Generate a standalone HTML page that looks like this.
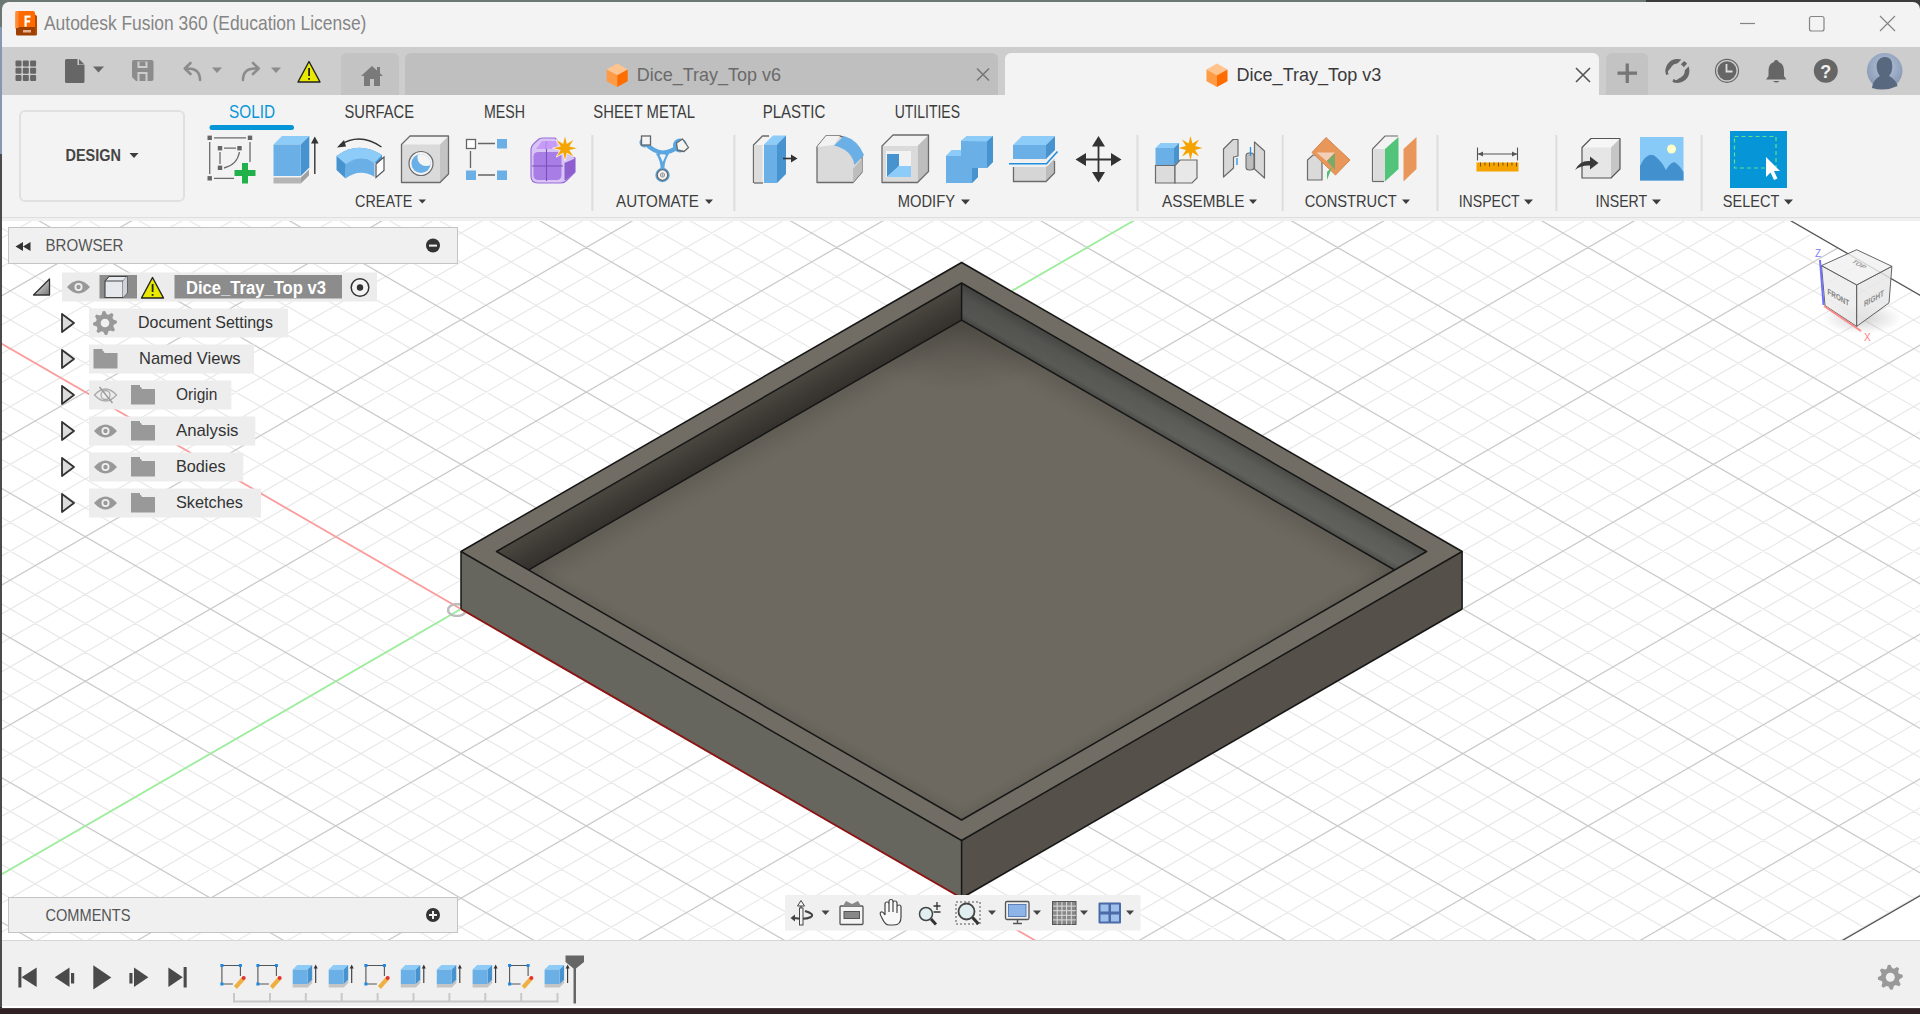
<!DOCTYPE html>
<html><head><meta charset="utf-8"><style>
*{box-sizing:border-box;margin:0;padding:0}
html,body{width:1920px;height:1014px;overflow:hidden;background:#3a2020;font-family:"Liberation Sans",sans-serif}
.a{position:absolute}
.t{position:absolute;white-space:nowrap;font-family:"Liberation Sans",sans-serif}
</style></head><body>
<div class="a" style="left:0;top:0;width:1646px;height:10px;background:#6b7772"></div>
<div class="a" style="left:1646px;top:0;width:274px;height:10px;background:#393c3b"></div>
<div class="a" style="left:0;top:0;width:3px;height:27px;background:#6b7772"></div>
<div class="a" style="left:0;top:27px;width:3px;height:127px;background:#8797b3"></div>
<div class="a" style="left:0;top:154px;width:3px;height:856px;background:#4b4b4b"></div>
<div class="a" style="left:0;top:1007px;width:1920px;height:7px;background:#2f2123"></div><div class="a" style="left:0;top:1008px;width:1920px;height:1px;background:#473b3d"></div>
<div class="a" style="left:2px;top:2px;width:1918px;height:1005px;background:#f3f3f3;border-radius:7px 7px 0 0;overflow:hidden">
</div>
<svg width="1920" height="1014" viewBox="0 0 1920 1014" style="position:absolute;left:0;top:0">
<defs><clipPath id="vpc"><rect x="2" y="221" width="1918" height="719"/></clipPath>
<clipPath id="gc"><polygon points="-6467.2,609.0 -2025.4,3173.5 2439.9,595.5 -2002.0,-1969.0"/></clipPath>
<clipPath id="ic"><polygon points="496.5,551.5 961.6,283.0 1426.6,551.5 961.6,820.0"/></clipPath>
<linearGradient id="gbl" gradientUnits="userSpaceOnUse" x1="0" y1="0" x2="0" y2="37" gradientTransform="translate(962,283) skewY(-30)"><stop offset="0" stop-color="#4a4741"/><stop offset="0.55" stop-color="#3d3a35"/><stop offset="1" stop-color="#34312d"/></linearGradient>
<linearGradient id="gbr" gradientUnits="userSpaceOnUse" x1="0" y1="0" x2="0" y2="37" gradientTransform="translate(962,283) skewY(30)"><stop offset="0" stop-color="#4a4b47"/><stop offset="0.35" stop-color="#5b5c57"/><stop offset="0.8" stop-color="#60615c"/><stop offset="1" stop-color="#4e4e4a"/></linearGradient>
<linearGradient id="gbrx" gradientUnits="userSpaceOnUse" x1="962" y1="0" x2="1200" y2="0"><stop offset="0" stop-color="#000" stop-opacity="0.12"/><stop offset="1" stop-color="#000" stop-opacity="0"/></linearGradient>
<filter id="gblur" x="-1%" y="-1%" width="102%" height="102%"><feGaussianBlur stdDeviation="0.45"/></filter>
<filter id="ao" x="-20%" y="-20%" width="140%" height="140%"><feGaussianBlur stdDeviation="9"/></filter>
<filter id="ao2" x="-20%" y="-20%" width="140%" height="140%"><feGaussianBlur stdDeviation="4"/></filter>
<radialGradient id="aoc" gradientUnits="userSpaceOnUse" cx="962" cy="322" r="70" gradientTransform="translate(962,322) scale(1.6,1) translate(-962,-322)"><stop offset="0" stop-color="#1e1c19" stop-opacity="0.3"/><stop offset="1" stop-color="#1e1c19" stop-opacity="0"/></radialGradient>
</defs>
<rect x="2" y="221" width="1918" height="719" fill="#ffffff"/>
<g clip-path="url(#vpc)"><g clip-path="url(#gc)">
<g filter="url(#gblur)"><path d="M-4480.8 1755.9L2447.4 -2244.1M-4455.7 1770.3L2472.5 -2229.7M-4430.7 1784.8L2497.5 -2215.2M-4405.6 1799.2L2522.6 -2200.8M-4355.6 1828.2L2572.6 -2171.8M-4330.5 1842.6L2597.7 -2157.4M-4305.5 1857.1L2622.7 -2142.9M-4280.4 1871.5L2647.8 -2128.5M-4230.3 1900.5L2697.9 -2099.5M-4205.3 1914.9L2722.9 -2085.1M-4180.2 1929.4L2748.0 -2070.6M-4155.2 1943.8L2773.0 -2056.2M-4105.1 1972.8L2823.1 -2027.2M-4080.1 1987.2L2848.1 -2012.8M-4055.0 2001.7L2873.2 -1998.3M-4030.0 2016.1L2898.2 -1983.9M-3979.9 2045.1L2948.3 -1954.9M-3954.8 2059.5L2973.4 -1940.5M-3929.8 2074.0L2998.4 -1926.0M-3904.7 2088.4L3023.5 -1911.6M-3854.6 2117.4L3073.6 -1882.6M-3829.6 2131.8L3098.6 -1868.2M-3804.6 2146.3L3123.6 -1853.7M-3779.5 2160.7L3148.7 -1839.3M-3729.4 2189.7L3198.8 -1810.3M-3704.4 2204.1L3223.8 -1795.9M-3679.3 2218.6L3248.9 -1781.4M-3654.3 2233.0L3273.9 -1767.0M-3604.2 2262.0L3324.0 -1738.0M-3579.1 2276.4L3349.1 -1723.6M-3554.1 2290.9L3374.1 -1709.1M-3529.1 2305.3L3399.1 -1694.7M-3479.0 2334.3L3449.2 -1665.7M-3453.9 2348.7L3474.3 -1651.3M-3428.9 2363.2L3499.3 -1636.8M-3403.8 2377.6L3524.4 -1622.4M-3353.7 2406.6L3574.5 -1593.4M-3328.7 2421.0L3599.5 -1579.0M-3303.6 2435.5L3624.6 -1564.5M-3278.6 2449.9L3649.6 -1550.1M-3228.5 2478.9L3699.7 -1521.1M-3203.5 2493.3L3724.7 -1506.7M-3178.4 2507.8L3749.8 -1492.2M-3153.4 2522.2L3774.8 -1477.8M-3103.3 2551.2L3824.9 -1448.8M-3078.2 2565.6L3850.0 -1434.4M-3053.2 2580.1L3875.0 -1419.9M-3028.1 2594.5L3900.1 -1405.5M-2978.1 2623.5L3950.1 -1376.5M-2953.0 2637.9L3975.2 -1362.1M-2928.0 2652.4L4000.2 -1347.6M-2902.9 2666.8L4025.3 -1333.2M-2852.8 2695.8L4075.4 -1304.2M-2827.8 2710.2L4100.4 -1289.8M-2802.7 2724.7L4125.5 -1275.3M-2777.7 2739.1L4150.5 -1260.9M-2727.6 2768.1L4200.6 -1231.9M-2702.6 2782.5L4225.6 -1217.5M-2677.5 2797.0L4250.7 -1203.0M-2652.5 2811.4L4275.7 -1188.6M-2602.4 2840.4L4325.8 -1159.6M-2577.3 2854.8L4350.9 -1145.2M-2552.3 2869.3L4375.9 -1130.7M-2527.2 2883.7L4401.0 -1116.3M-2477.1 2912.7L4451.1 -1087.3M-2452.1 2927.1L4476.1 -1072.9M-2427.1 2941.6L4501.1 -1058.4M-2402.0 2956.0L4526.2 -1044.0M-2351.9 2985.0L4576.3 -1015.0M-2326.9 2999.4L4601.3 -1000.6M-2301.8 3013.9L4626.4 -986.1M-2276.8 3028.3L4651.4 -971.7M-2226.7 3057.3L4701.5 -942.7M-2201.6 3071.7L4726.6 -928.3M-2176.6 3086.2L4751.6 -913.8M-2151.6 3100.6L4776.6 -899.4M-2101.5 3129.6L4826.7 -870.4M-2076.4 3144.0L4851.8 -856.0M-2051.4 3158.5L4876.8 -841.5M-2026.3 3172.9L4901.9 -827.1M-4480.8 -537.9L2447.4 3462.1M-4455.7 -552.3L2472.5 3447.7M-4430.7 -566.8L2497.5 3433.2M-4405.6 -581.2L2522.6 3418.8M-4355.6 -610.2L2572.6 3389.8M-4330.5 -624.6L2597.7 3375.4M-4305.5 -639.1L2622.7 3360.9M-4280.4 -653.5L2647.8 3346.5M-4230.3 -682.5L2697.9 3317.5M-4205.3 -696.9L2722.9 3303.1M-4180.2 -711.4L2748.0 3288.6M-4155.2 -725.8L2773.0 3274.2M-4105.1 -754.8L2823.1 3245.2M-4080.1 -769.2L2848.1 3230.8M-4055.0 -783.7L2873.2 3216.3M-4030.0 -798.1L2898.2 3201.9M-3979.9 -827.1L2948.3 3172.9M-3954.8 -841.5L2973.4 3158.5M-3929.8 -856.0L2998.4 3144.0M-3904.7 -870.4L3023.5 3129.6M-3854.6 -899.4L3073.6 3100.6M-3829.6 -913.8L3098.6 3086.2M-3804.6 -928.3L3123.6 3071.7M-3779.5 -942.7L3148.7 3057.3M-3729.4 -971.7L3198.8 3028.3M-3704.4 -986.1L3223.8 3013.9M-3679.3 -1000.6L3248.9 2999.4M-3654.3 -1015.0L3273.9 2985.0M-3604.2 -1044.0L3324.0 2956.0M-3579.1 -1058.4L3349.1 2941.6M-3554.1 -1072.9L3374.1 2927.1M-3529.1 -1087.3L3399.1 2912.7M-3479.0 -1116.3L3449.2 2883.7M-3453.9 -1130.7L3474.3 2869.3M-3428.9 -1145.2L3499.3 2854.8M-3403.8 -1159.6L3524.4 2840.4M-3353.7 -1188.6L3574.5 2811.4M-3328.7 -1203.0L3599.5 2797.0M-3303.6 -1217.5L3624.6 2782.5M-3278.6 -1231.9L3649.6 2768.1M-3228.5 -1260.9L3699.7 2739.1M-3203.5 -1275.3L3724.7 2724.7M-3178.4 -1289.8L3749.8 2710.2M-3153.4 -1304.2L3774.8 2695.8M-3103.3 -1333.2L3824.9 2666.8M-3078.2 -1347.6L3850.0 2652.4M-3053.2 -1362.1L3875.0 2637.9M-3028.1 -1376.5L3900.1 2623.5M-2978.1 -1405.5L3950.1 2594.5M-2953.0 -1419.9L3975.2 2580.1M-2928.0 -1434.4L4000.2 2565.6M-2902.9 -1448.8L4025.3 2551.2M-2852.8 -1477.8L4075.4 2522.2M-2827.8 -1492.2L4100.4 2507.8M-2802.7 -1506.7L4125.5 2493.3M-2777.7 -1521.1L4150.5 2478.9M-2727.6 -1550.1L4200.6 2449.9M-2702.6 -1564.5L4225.6 2435.5M-2677.5 -1579.0L4250.7 2421.0M-2652.5 -1593.4L4275.7 2406.6M-2602.4 -1622.4L4325.8 2377.6M-2577.3 -1636.8L4350.9 2363.2M-2552.3 -1651.3L4375.9 2348.7M-2527.2 -1665.7L4401.0 2334.3M-2477.1 -1694.7L4451.1 2305.3M-2452.1 -1709.1L4476.1 2290.9M-2427.1 -1723.6L4501.1 2276.4M-2402.0 -1738.0L4526.2 2262.0M-2351.9 -1767.0L4576.3 2233.0M-2326.9 -1781.4L4601.3 2218.6M-2301.8 -1795.9L4626.4 2204.1M-2276.8 -1810.3L4651.4 2189.7M-2226.7 -1839.3L4701.5 2160.7M-2201.6 -1853.7L4726.6 2146.3M-2176.6 -1868.2L4751.6 2131.8M-2151.6 -1882.6L4776.6 2117.4M-2101.5 -1911.6L4826.7 2088.4M-2076.4 -1926.0L4851.8 2074.0M-2051.4 -1940.5L4876.8 2059.5M-2026.3 -1954.9L4901.9 2045.1" stroke="#e9e9e9" stroke-width="1.25" fill="none"/>
<path d="M-4505.8 1741.4L2422.4 -2258.6M-4380.6 1813.7L2547.6 -2186.3M-4255.4 1886.0L2672.8 -2114.0M-4130.1 1958.3L2798.1 -2041.7M-4004.9 2030.6L2923.3 -1969.4M-3879.7 2102.9L3048.5 -1897.1M-3754.5 2175.2L3173.7 -1824.8M-3629.2 2247.5L3299.0 -1752.5M-3504.0 2319.8L3424.2 -1680.2M-3378.8 2392.1L3549.4 -1607.9M-3253.6 2464.4L3674.6 -1535.6M-3128.3 2536.7L3799.9 -1463.3M-3003.1 2609.0L3925.1 -1391.0M-2877.9 2681.3L4050.3 -1318.7M-2752.6 2753.6L4175.6 -1246.4M-2627.4 2825.9L4300.8 -1174.1M-2502.2 2898.2L4426.0 -1101.8M-2377.0 2970.5L4551.2 -1029.5M-2251.7 3042.8L4676.5 -957.2M-2126.5 3115.1L4801.7 -884.9M-4505.8 -523.4L2422.4 3476.6M-4380.6 -595.7L2547.6 3404.3M-4255.4 -668.0L2672.8 3332.0M-4130.1 -740.3L2798.1 3259.7M-4004.9 -812.6L2923.3 3187.4M-3879.7 -884.9L3048.5 3115.1M-3754.5 -957.2L3173.7 3042.8M-3629.2 -1029.5L3299.0 2970.5M-3504.0 -1101.8L3424.2 2898.2M-3378.8 -1174.1L3549.4 2825.9M-3253.6 -1246.4L3674.6 2753.6M-3128.3 -1318.7L3799.9 2681.3M-3003.1 -1391.0L3925.1 2609.0M-2877.9 -1463.3L4050.3 2536.7M-2752.6 -1535.6L4175.6 2464.4M-2627.4 -1607.9L4300.8 2392.1M-2502.2 -1680.2L4426.0 2319.8M-2377.0 -1752.5L4551.2 2247.5M-2251.7 -1824.8L4676.5 2175.2M-2126.5 -1897.1L4801.7 2102.9" stroke="#cbcbcb" stroke-width="1.3" fill="none"/></g>
</g>
<path d="M-2025.4 3173.5L2439.9 595.5M-2002.0 -1969.0L2439.9 595.5" stroke="#555" stroke-width="1.3" fill="none"/>
<path d="M-3003.1 -1391.0L3925.1 2609.0" stroke="#ff9c9c" stroke-width="1.7" filter="url(#gblur)" fill="none"/>
<path d="M-3003.1 2609.0L1462.1 31.0" stroke="#9cf09c" stroke-width="1.7" filter="url(#gblur)" fill="none"/>
<ellipse cx="457.0" cy="610.0" rx="9" ry="6" fill="none" stroke="#bdbdbd" stroke-width="2.6" filter="url(#gblur)"/>
<polygon points="461.0,609.0 961.6,898.0 961.6,840.5 461.0,551.5" fill="#66665f"/>
<polygon points="961.6,898.0 1462.1,609.0 1462.1,551.5 961.6,840.5" fill="#55514a"/>
<path d="M461.0,551.5 961.6,262.5 1462.1,551.5 961.6,840.5Z M496.5,551.5 961.6,283.0 1426.6,551.5 961.6,820.0Z" fill="#716d64" fill-rule="evenodd"/>
<g clip-path="url(#ic)">
<polygon points="496.5,588.5 961.6,320.0 1426.6,588.5 961.6,857.0" fill="#6d6960"/>
<polyline points="496.5,588.5 961.6,320.0 1426.6,588.5" fill="none" stroke="#2e2b27" stroke-width="18" opacity="0.24" filter="url(#ao)"/>
<ellipse cx="962" cy="322" rx="115" ry="72" fill="url(#aoc)"/>
<polyline points="961.6,283.0 496.5,551.5 961.6,820.0 1426.6,551.5" fill="none" stroke="#2e2b27" stroke-width="8" opacity="0.16" filter="url(#ao2)"/>
<polygon points="496.5,551.5 961.6,283.0 961.6,320.0 496.5,588.5" fill="url(#gbl)"/>
<polygon points="961.6,283.0 1426.6,551.5 1426.6,588.5 961.6,320.0" fill="url(#gbr)"/>
<polygon points="961.6,283.0 1426.6,551.5 1426.6,588.5 961.6,320.0" fill="url(#gbrx)"/>
<polyline points="496.5,588.5 961.6,320.0 1426.6,588.5" fill="none" stroke="#161616" stroke-width="1.5"/>
<path d="M961.6 283.0L961.6 320.0" stroke="#161616" stroke-width="1.5"/>
</g>
<polygon points="496.5,551.5 961.6,283.0 1426.6,551.5 961.6,820.0" fill="none" stroke="#161616" stroke-width="1.5" stroke-linejoin="round"/>
<polygon points="461.0,551.5 961.6,262.5 1462.1,551.5 961.6,840.5" fill="none" stroke="#161616" stroke-width="1.5" stroke-linejoin="round"/>
<path d="M461.0 609.0L461.0 551.5" stroke="#161616" stroke-width="1.5"/>
<path d="M961.6 898.0L961.6 840.5" stroke="#161616" stroke-width="1.5"/>
<path d="M1462.1 609.0L1462.1 551.5" stroke="#161616" stroke-width="1.5"/>
<path d="M961.6 898.0L1462.1 609.0" stroke="#161616" stroke-width="1.5"/>
<path d="M461.0 609.0L961.6 898.0" stroke="#8a1414" stroke-width="1.8"/>
</g></svg>
<!-- tab bar -->
<div class="a" style="left:2px;top:47px;width:1918px;height:48px;background:#cdcdcd"></div>
<div class="a" style="left:341px;top:53px;width:58px;height:42px;background:#c3c3c3;border-radius:6px 6px 0 0"></div>
<div class="a" style="left:405px;top:53px;width:593px;height:42px;background:#bfbfbf;border-radius:6px 6px 0 0"></div>
<div class="a" style="left:1005px;top:53px;width:594px;height:42px;background:#f3f3f3;border-radius:6px 6px 0 0"></div>
<div class="a" style="left:1606px;top:53px;width:42px;height:42px;background:#c3c3c3;border-radius:6px 6px 0 0"></div>
<!-- toolbar -->
<div class="a" style="left:2px;top:95px;width:1918px;height:122px;background:#f3f3f3"></div><div class="a" style="left:2px;top:217px;width:1918px;height:1px;background:#dedede"></div><div class="a" style="left:2px;top:218px;width:1918px;height:3px;background:#f0f0f0"></div>
<div class="a" style="left:19px;top:110px;width:166px;height:92px;border:2px solid #e0e0e0;border-radius:6px"></div>
<!-- timeline -->
<div class="a" style="left:2px;top:940px;width:1918px;height:67px;background:#f0f0f0;border-top:1px solid #d6d6d6"></div>
<div class="a" style="left:2px;top:1006px;width:1918px;height:1.5px;background:#ffffff"></div>
<svg width="1920" height="1014" viewBox="0 0 1920 1014" style="position:absolute;left:0;top:0" font-family="Liberation Sans, sans-serif">
<g>
<rect x="15.5" y="11" width="19.5" height="19" rx="2" fill="#ff6a00"/>
<rect x="16" y="27" width="21" height="8.5" rx="1.5" fill="#9e4000"/>
<path d="M35 14.5 L37 16 L37 34 L35 34Z" fill="#b84a00"/>
<rect x="15.5" y="11" width="3" height="17" fill="#ff8a3a"/>
<path d="M24.5 15.5h6v2.2h-3.8v2.5h3.4v2.2h-3.4v4.3h-2.2z" fill="#ffffff"/>
<rect x="23" y="30" width="8" height="2.5" fill="#e8b090"/>
</g>
<text x="44.0" y="30.2" font-size="19.42" fill="#858585" font-weight="400" textLength="322.4" lengthAdjust="spacingAndGlyphs" >Autodesk Fusion 360 (Education License)</text>
<path d="M1740 23.5h15" stroke="#858585" stroke-width="1.2"/>
<rect x="1809.5" y="16.5" width="14.5" height="14.5" rx="2" fill="none" stroke="#858585" stroke-width="1.2"/>
<path d="M1880 16L1895 31M1895 16L1880 31" stroke="#858585" stroke-width="1.2"/>
<rect x="15.5" y="60.5" width="6" height="6" rx="1" fill="#666"/><rect x="15.5" y="67.8" width="6" height="6" rx="1" fill="#666"/><rect x="15.5" y="75.1" width="6" height="6" rx="1" fill="#666"/><rect x="22.8" y="60.5" width="6" height="6" rx="1" fill="#666"/><rect x="22.8" y="67.8" width="6" height="6" rx="1" fill="#666"/><rect x="22.8" y="75.1" width="6" height="6" rx="1" fill="#666"/><rect x="30.1" y="60.5" width="6" height="6" rx="1" fill="#666"/><rect x="30.1" y="67.8" width="6" height="6" rx="1" fill="#666"/><rect x="30.1" y="75.1" width="6" height="6" rx="1" fill="#666"/>
<path d="M65 60.5 Q65 59 66.5 59 L77.5 59 L77.5 65 L84.5 65 L84.5 81.5 Q84.5 83 83 83 L66.5 83 Q65 83 65 81.5Z" fill="#666"/><path d="M79 59L84.5 64.5L79 64.5Z" fill="#666"/>
<path d="M93 66.5L104 66.5L98.5 72.5Z" fill="#666"/>
<path d="M132 62 Q132 60 134 60 L151.5 60 Q153.5 60 153.5 62 L153.5 79 Q153.5 81 151.5 81 L136 81 L132 77Z" fill="#8c8c8c"/><rect x="137.5" y="61.5" width="10" height="6.5" fill="#cdcdcd"/><rect x="137.5" y="72" width="10" height="9" fill="#cdcdcd"/><rect x="139.5" y="74" width="6" height="7" fill="#8c8c8c"/><rect x="139.5" y="61.5" width="6" height="4.5" fill="#8c8c8c"/>
<path d="M200 80 C200 72 196 68.5 188 68.5 L185 68.5 M190.5 63 L184.8 68.5 L190.5 74" fill="none" stroke="#8c8c8c" stroke-width="2.6" stroke-linecap="round" stroke-linejoin="round"/>
<path d="M212 67.5L222 67.5L217.0 73.0Z" fill="#8c8c8c"/>
<path d="M243 80 C243 72 247 68.5 255 68.5 L258.5 68.5 M253 63 L258.7 68.5 L253 74" fill="none" stroke="#8c8c8c" stroke-width="2.6" stroke-linecap="round" stroke-linejoin="round"/>
<path d="M271 67.5L281 67.5L276.0 73.0Z" fill="#8c8c8c"/>
<path d="M309 61.5 L320 82 L298 82Z" fill="#e8e800" stroke="#222" stroke-width="1.4" stroke-linejoin="round"/><rect x="308.2" y="68" width="1.8" height="8" fill="#222"/><rect x="308.2" y="78" width="1.8" height="1.8" fill="#222"/>
<path d="M372 66 L383 76 L380 76 L380 86 L364 86 L364 76 L361 76Z" fill="#7a7a7a"/><rect x="377" y="67" width="3" height="6" fill="#7a7a7a"/><rect x="370" y="79" width="4" height="7" fill="#c3c3c3"/>
<path d="M617.2 63.55 L627.7 69.425 L617.2 75.3 L606.7 69.425Z" fill="#ffc48e"/><path d="M606.7 69.425 L617.2 75.3 L617.2 87.05 L606.7 81.175Z" fill="#ff9a45"/><path d="M627.7 69.425 L617.2 75.3 L617.2 87.05 L627.7 81.175Z" fill="#ff6d00"/>
<text x="636.7" y="81.0" font-size="18.84" fill="#6a6a6a" font-weight="400" textLength="144.3" lengthAdjust="spacingAndGlyphs" >Dice_Tray_Top v6</text>
<path d="M977 68.5L989 80.5M989 68.5L977 80.5" stroke="#777" stroke-width="1.6"/>
<path d="M1217 63.55 L1227.5 69.425 L1217 75.3 L1206.5 69.425Z" fill="#ffc48e"/><path d="M1206.5 69.425 L1217 75.3 L1217 87.05 L1206.5 81.175Z" fill="#ff9a45"/><path d="M1227.5 69.425 L1217 75.3 L1217 87.05 L1227.5 81.175Z" fill="#ff6d00"/>
<text x="1236.5" y="81.0" font-size="18.84" fill="#3a3a3a" font-weight="400" textLength="144.8" lengthAdjust="spacingAndGlyphs" >Dice_Tray_Top v3</text>
<path d="M1576 68L1590 82M1590 68L1576 82" stroke="#555" stroke-width="1.6"/>
<rect x="1617.5" y="71.5" width="19.5" height="3.3" fill="#777"/><rect x="1625.6" y="63.5" width="3.3" height="19.5" fill="#777"/>
<path d="M1668.3 74.2 A9.7 9.7 0 1 1 1673.3 79.7" fill="none" stroke="#666" stroke-width="4.6"/>
<g transform="rotate(45 1676 72)"><rect x="1669.5" y="66.5" width="13" height="12" rx="3" fill="#cdcdcd"/><rect x="1671" y="57.5" width="3" height="10" fill="#cdcdcd"/><rect x="1678" y="57.5" width="3" height="10" fill="#cdcdcd"/></g>
<circle cx="1727" cy="70.8" r="11.5" fill="none" stroke="#666" stroke-width="1.2"/><circle cx="1727" cy="70.8" r="9.5" fill="#666"/><path d="M1726.5 64v7.5h6" fill="none" stroke="#ddd" stroke-width="1.8"/>
<path d="M1776.3 60 C1778 60 1778.5 61 1778.5 62 C1783 63.5 1784 67 1784 72 L1784 76 L1786.5 79.5 L1766 79.5 L1768.5 76 L1768.5 72 C1768.5 67 1769.5 63.5 1774 62 C1774 61 1774.5 60 1776.3 60Z" fill="#666"/><path d="M1773 81 L1779.5 81 Q1776.3 84 1773 81Z" fill="#666"/>
<circle cx="1825.8" cy="70.8" r="12" fill="#666"/><text x="1825.8" y="77.5" font-size="18" font-weight="700" fill="#f0f0f0" text-anchor="middle">?</text>
<defs><radialGradient id="avg" cx="0.5" cy="0.4" r="0.6"><stop offset="0" stop-color="#b8c6dc"/><stop offset="1" stop-color="#8898b4"/></radialGradient></defs>
<circle cx="1884.7" cy="70.8" r="17.8" fill="url(#avg)"/><path d="M1872 88 C1873 80 1878 77 1880 76 C1877 73 1876 67 1877 63 C1879 56 1888 55 1891 60 C1893 64 1893 72 1889 76 C1893 78 1897 82 1897.5 86 Q1885 92 1872 88Z" fill="#58687e"/>
<text x="65.5" y="160.8" font-size="17.39" fill="#454545" font-weight="700" textLength="55.5" lengthAdjust="spacingAndGlyphs" >DESIGN</text>
<path d="M129.5 153L138.5 153L134.0 157.9Z" fill="#3c3c3c"/>
<text x="229.0" y="117.6" font-size="17.83" fill="#0696d7" font-weight="400" textLength="46.0" lengthAdjust="spacingAndGlyphs" >SOLID</text>
<text x="344.5" y="117.6" font-size="17.83" fill="#3c3c3c" font-weight="400" textLength="69.5" lengthAdjust="spacingAndGlyphs" >SURFACE</text>
<text x="484.0" y="117.6" font-size="17.83" fill="#3c3c3c" font-weight="400" textLength="41.0" lengthAdjust="spacingAndGlyphs" >MESH</text>
<text x="593.3" y="117.6" font-size="17.83" fill="#3c3c3c" font-weight="400" textLength="101.7" lengthAdjust="spacingAndGlyphs" >SHEET METAL</text>
<text x="762.7" y="117.6" font-size="17.83" fill="#3c3c3c" font-weight="400" textLength="62.6" lengthAdjust="spacingAndGlyphs" >PLASTIC</text>
<text x="894.7" y="117.6" font-size="17.83" fill="#3c3c3c" font-weight="400" textLength="65.3" lengthAdjust="spacingAndGlyphs" >UTILITIES</text>
<rect x="209.5" y="125" width="84.5" height="5" rx="2.5" fill="#0696d7"/>
<text x="355.0" y="207.2" font-size="17.39" fill="#3c3c3c" font-weight="400" textLength="57.3" lengthAdjust="spacingAndGlyphs" >CREATE</text>
<path d="M418.5 199.5L426 199.5L422.25 203.6Z" fill="#3c3c3c"/>
<text x="616.0" y="207.2" font-size="17.39" fill="#3c3c3c" font-weight="400" textLength="83.0" lengthAdjust="spacingAndGlyphs" >AUTOMATE</text>
<path d="M705 199.5L713 199.5L709.0 203.9Z" fill="#3c3c3c"/>
<text x="897.7" y="207.2" font-size="17.39" fill="#3c3c3c" font-weight="400" textLength="57.3" lengthAdjust="spacingAndGlyphs" >MODIFY</text>
<path d="M961 199.5L970 199.5L965.5 204.4Z" fill="#3c3c3c"/>
<text x="1162.0" y="207.2" font-size="17.39" fill="#3c3c3c" font-weight="400" textLength="82.4" lengthAdjust="spacingAndGlyphs" >ASSEMBLE</text>
<path d="M1249 199.5L1257 199.5L1253.0 203.9Z" fill="#3c3c3c"/>
<text x="1304.7" y="207.2" font-size="17.39" fill="#3c3c3c" font-weight="400" textLength="92.0" lengthAdjust="spacingAndGlyphs" >CONSTRUCT</text>
<path d="M1402 199.5L1410 199.5L1406.0 203.9Z" fill="#3c3c3c"/>
<text x="1458.7" y="207.2" font-size="17.39" fill="#3c3c3c" font-weight="400" textLength="61.0" lengthAdjust="spacingAndGlyphs" >INSPECT</text>
<path d="M1524 199.5L1533 199.5L1528.5 204.4Z" fill="#3c3c3c"/>
<text x="1595.6" y="207.2" font-size="17.39" fill="#3c3c3c" font-weight="400" textLength="51.6" lengthAdjust="spacingAndGlyphs" >INSERT</text>
<path d="M1652 199.5L1661 199.5L1656.5 204.4Z" fill="#3c3c3c"/>
<text x="1722.8" y="207.2" font-size="17.39" fill="#3c3c3c" font-weight="400" textLength="56.6" lengthAdjust="spacingAndGlyphs" >SELECT</text>
<path d="M1784 199.5L1793 199.5L1788.5 204.4Z" fill="#3c3c3c"/>
<rect x="591.4" y="135" width="2" height="76" fill="#dddddd"/>
<rect x="733.4" y="135" width="2" height="76" fill="#dddddd"/>
<rect x="1136.5" y="135" width="2" height="76" fill="#dddddd"/>
<rect x="1281.7" y="135" width="2" height="76" fill="#dddddd"/>
<rect x="1436.5" y="135" width="2" height="76" fill="#dddddd"/>
<rect x="1555.3" y="135" width="2" height="76" fill="#dddddd"/>
<rect x="1700.6" y="135" width="2" height="76" fill="#dddddd"/>
</svg>
<svg width="1920" height="1014" viewBox="0 0 1920 1014" style="position:absolute;left:0;top:0"><g transform="translate(200,130)"><rect x="7.499999999999999" y="5.6" width="4.4" height="4.4" fill="#666"/><rect x="47.8" y="5.6" width="4.4" height="4.4" fill="#666"/><rect x="7.499999999999999" y="46.099999999999994" width="4.4" height="4.4" fill="#666"/><path d="M14 7.8H46M9.7 12V44M50 12V32M14 48.3H34" stroke="#6b6b6b" stroke-width="1.3"/><rect x="17.8" y="16.0" width="4.4" height="4.4" fill="#666"/><rect x="37.3" y="16.0" width="4.4" height="4.4" fill="#666"/><rect x="17.8" y="35.599999999999994" width="4.4" height="4.4" fill="#666"/><path d="M24 18.2H36M20 22V34M24 38 Q37 35 39.5 22" fill="none" stroke="#6b6b6b" stroke-width="1.3"/><path d="M42 33H48V40H55.5V46H48V53.5H42V46H34.5V40H42Z" fill="#22b04b"/></g>
<g transform="translate(200,130)"><path d="M73.5 47.5H100.8V53.5H73.5Z" fill="#b4b4b4"/><path d="M100.8 47.5L109 39.5V45.5L100.8 53.5Z" fill="#a0a0a0"/><path d="M73.5 14.5L82.0 6.0L109.3 6.0L100.8 14.5Z" fill="#8dcbf8"/><path d="M100.8 14.5L109.3 6.0L109.3 37.5L100.8 46Z" fill="#4793cf"/><rect x="73.5" y="14.5" width="27.299999999999997" height="31.5" fill="#6ab0e6"/><path d="M114.8 44V12" stroke="#333" stroke-width="1.4"/><path d="M111 13.5L114.8 6.5L118.6 13.5Z" fill="#333"/></g>
<g transform="translate(200,130)"><path d="M181.5 17 Q160 2 140 15" fill="none" stroke="#333" stroke-width="1.3"/><path d="M137 17.5L144 10L146 16.5Z" fill="#333"/><path d="M136.5 26 Q158 10 182 25 L182 36 Q160 24 146 33 L145.5 48.5 L136.5 40Z" fill="#4793cf"/><path d="M136.5 26 Q158 10 182 25 L174.5 33 Q160 24 145.5 34Z" fill="#8dcbf8"/><path d="M145.5 34 Q160 24 174.5 33 L174.5 47 Q160 38 145.5 48.5Z" fill="#6ab0e6"/><path d="M176 34L184 27V40.5L176 47.5Z" fill="#fff" stroke="#555" stroke-width="1.2"/></g>
<g transform="translate(390,130)"><path d="M11.5 14.5L20.0 6.0L58.5 6.0L50 14.5Z" fill="#f2f2f2"/><path d="M50 14.5L58.5 6.0L58.5 44.0L50 52.5Z" fill="#c4c4c4"/><rect x="11.5" y="14.5" width="38.5" height="38.0" fill="#dadada"/><path d="M11.5 52.5L11.5 14.5L20.0 6.0L58.5 6.0L58.5 44.0L50 52.5Z" fill="none" stroke="#6b6b6b" stroke-width="1.3" stroke-linejoin="round"/><defs><clipPath id="holec"><circle cx="31" cy="33.5" r="9.6"/></clipPath></defs><circle cx="31" cy="33.5" r="12" fill="#f4f4f4" stroke="#6b6b6b" stroke-width="1.2"/><circle cx="31" cy="33.5" r="9.6" fill="#6ab0e6"/><circle cx="36" cy="27.5" r="8.6" fill="#f4f4f4" clip-path="url(#holec)"/></g>
<g transform="translate(390,130)"><rect x="76.5" y="9.5" width="9" height="9" fill="#fff" stroke="#666" stroke-width="1.3"/><rect x="107" y="9" width="10" height="9.5" fill="#6ab0e6"/><rect x="76" y="40.5" width="10" height="9.5" fill="#6ab0e6"/><rect x="107" y="40.5" width="10" height="9.5" fill="#6ab0e6"/><path d="M88 13.5H105M80.5 21V38M88 45H105" stroke="#666" stroke-width="1.3"/></g>
<g transform="translate(525,130)"><path d="M6 20 Q6 16 9.5 13 L14 9 Q15.5 8 18 8 H30 L36 14 L44 24 L50 28 V42 L41 51 Q39 53 35 53 H13 Q6 53 6 46Z" fill="#d9c4f6" stroke="#9a6fd8" stroke-width="1.2" stroke-linejoin="round"/><path d="M11 19 L17 11 H31 L33 19Z" fill="#c79bf8"/><path d="M22 11 Q20 15 21 19" fill="none" stroke="#a983e0" stroke-width="0.9"/><rect x="8.5" y="22" width="28" height="28" rx="4.5" fill="#a87de6"/><path d="M39.5 33 L50 28.5 V42 L41 50 H39.5Z" fill="#8d5fcf"/><path d="M21.5 19V51M7 36H38" stroke="#7b51b8" stroke-width="1.1"/><polygon points="40.0,6.5 41.8,14.1 48.3,10.0 44.2,16.5 51.8,18.3 44.2,20.1 48.3,26.6 41.8,22.5 40.0,30.1 38.2,22.5 31.7,26.6 35.8,20.1 28.2,18.3 35.8,16.5 31.7,10.0 38.2,14.1" fill="#f5a500" stroke="#f2f2f2" stroke-width="1.6" paint-order="stroke" stroke-linejoin="round"/></g>
<g transform="translate(600,130)"><path d="M45 13 Q54 22 62.5 22.5 Q71 22.5 79 16" fill="none" stroke="#5aa6e0" stroke-width="4.2"/><path d="M57.5 23 Q62.5 30 62.5 40 M67.5 23 Q62.5 30 62.5 40" fill="none" stroke="#5aa6e0" stroke-width="3.6"/><path d="M59.5 24.8L66 24.8L62.8 32Z" fill="#f2f2f2"/><circle cx="44.5" cy="12.5" r="5" fill="#5aa6e0"/><circle cx="80" cy="15.5" r="7" fill="#5aa6e0"/><circle cx="62.5" cy="45" r="7.2" fill="#5aa6e0"/><circle cx="62.5" cy="45" r="5.3" fill="#f4f4f4" stroke="#666" stroke-width="1.3"/><circle cx="62.5" cy="45" r="2.2" fill="none" stroke="#888" stroke-width="0.8"/><path d="M62.5 43V47M60.5 45H64.5" stroke="#999" stroke-width="0.7"/><rect x="41.5" y="6" width="9" height="9" fill="#f4f4f4" stroke="#666" stroke-width="1.3"/><path d="M76.5 13 L82.5 9 L88.5 17.5 L84 21.5 L77.5 20Z" fill="#f4f4f4" stroke="#666" stroke-width="1.3" stroke-linejoin="round"/></g>
<g transform="translate(600,130)"><path d="M153.5 53 V15 L162.5 6 H169" fill="none" stroke="#6b6b6b" stroke-width="1.3"/><path d="M154.5 15 H162.5 V53 H154.5Z" fill="#dcdcdc"/><path d="M154 53H163" stroke="#6b6b6b" stroke-width="1.3"/><path d="M164 14.5L173 5.5L186 5.5L177 14.5Z" fill="#8dcbf8"/><path d="M177 14.5L186 5.5L186 44L177 53Z" fill="#4793cf"/><rect x="164" y="14.5" width="13" height="38.5" fill="#6ab0e6"/><path d="M183 28.5H193" stroke="#333" stroke-width="1.6"/><path d="M191 24.5L197.5 28.5L191 32.5Z" fill="#333"/></g>
<g transform="translate(800,130)"><path d="M17 52.5 V17 L26 6 H40 Q55 10 62 25 L62 42 L53 52.5Z" fill="#dadada" stroke="#6b6b6b" stroke-width="1.3" stroke-linejoin="round"/><path d="M17 17 L26 6 H40 L34 15 Q24 16 17 17Z" fill="#f2f2f2"/><path d="M53 52.5 V39 L62 28 V42Z" fill="#bdbdbd"/><path d="M34 15.5 L44 6 Q58 10 64 25 L54.5 35 Q52 20 34 15.5Z" fill="#6ab0e6"/></g>
<g transform="translate(800,130)"><path d="M82 16L93 5L128.5 5L117.5 16Z" fill="#f2f2f2"/><path d="M117.5 16L128.5 5L128.5 41.5L117.5 52.5Z" fill="#bdbdbd"/><rect x="82" y="16" width="35.5" height="36.5" fill="#dadada"/><path d="M82 52.5L82 16L93 5L128.5 5L128.5 41.5L117.5 52.5Z" fill="none" stroke="#6b6b6b" stroke-width="1.3" stroke-linejoin="round"/><rect x="86" y="21" width="25" height="26" fill="#f2f2f2"/><path d="M87 24H99V36L87 47Z" fill="#4793cf"/><path d="M87 47L99 36H111V47Z" fill="#8dcbf8"/></g>
<g transform="translate(800,130)"><path d="M146 26 L152 20 H161 V11 L167 6 H193 V32 L187 38 H178 V47 L172 53 H146Z" fill="#6ab0e6"/><path d="M146 26 L152 20 H161 V26Z" fill="#8dcbf8"/><path d="M161 11 L167 6 H193 L187 11.5Z" fill="#8dcbf8"/><path d="M187 11.5 L193 6 V32 L187 38Z" fill="#4793cf"/><path d="M172 38 L178 38 V47 L172 53Z" fill="#4793cf"/></g>
<g transform="translate(1000,130)"><path d="M13.5 37L22.0 28.5L54.5 28.5L46 37Z" fill="#eeeeee"/><path d="M46 37L54.5 28.5L54.5 43.0L46 51.5Z" fill="#bdbdbd"/><rect x="13.5" y="37" width="32.5" height="14.5" fill="#d6d6d6"/><path d="M13.5 37 V51.5 H46 L54.5 43 V31" fill="none" stroke="#6b6b6b" stroke-width="1.3"/><path d="M9 33.8 H46.5 L57.5 21.5" fill="none" stroke="#f2f2f2" stroke-width="4.5"/><path d="M9 33.8 H46.5 L57.5 21.5" fill="none" stroke="#1f8de0" stroke-width="1.6"/><path d="M13 15L22 6L55 6L46 15Z" fill="#8dcbf8"/><path d="M46 15L55 6L55 20L46 29Z" fill="#4793cf"/><rect x="13" y="15" width="33" height="14" fill="#6ab0e6"/></g>
<g transform="translate(1000,130)"><path d="M98.5 11 V48M79 29.5 H119" stroke="#333" stroke-width="1.8"/><path d="M92 16.5 L98.5 6 L105 16.5Z M92 42 L98.5 52.5 L105 42Z M86 23 L75.5 29.5 L86 36Z M111 23 L121.5 29.5 L111 36Z" fill="#333"/></g>
<g transform="translate(1000,130)"><path d="M155.5 18L160.5 13L179 13L174 18Z" fill="#8dcbf8"/><path d="M174 18L179 13L179 30.5L174 35.5Z" fill="#4793cf"/><rect x="155.5" y="18" width="18.5" height="17.5" fill="#6ab0e6"/><path d="M155.5 35.5 V53 H175 V35.5Z" fill="#dcdcdc" stroke="#6b6b6b" stroke-width="1.2"/><path d="M175 35.5 L180 30 H197 V48 L192 53 H175Z" fill="#e8e8e8" stroke="#6b6b6b" stroke-width="1.2"/><polygon points="190.5,6.0 192.4,13.4 199.0,9.5 195.1,16.1 202.5,18.0 195.1,19.9 199.0,26.5 192.4,22.6 190.5,30.0 188.6,22.6 182.0,26.5 185.9,19.9 178.5,18.0 185.9,16.1 182.0,9.5 188.6,13.4" fill="#f5a300"/></g>
<g transform="translate(1200,130)"><path d="M23.5 47 V19 L33 9.5 H38 V26 L33.5 27 V38 L23.5 47Z" fill="#d8d8d8" stroke="#6b6b6b" stroke-width="1.2" stroke-linejoin="round"/><path d="M64.5 48 V21 L54.5 12 V39Z" fill="#d8d8d8" stroke="#6b6b6b" stroke-width="1.2" stroke-linejoin="round"/><rect x="46" y="23" width="8" height="17" rx="3" fill="#bdbdbd" stroke="#6b6b6b" stroke-width="1.1"/><path d="M37 28V35M50.5 17V26" stroke="#2a8fe0" stroke-width="1.3"/></g>
<g transform="translate(1200,130)"><path d="M107.5 50 V30 L113 25 H122 V50Z" fill="#dadada" stroke="#6b6b6b" stroke-width="1.2"/><path d="M126 7.5 L150 30 L135.5 45 L112 22.5Z" fill="#e8965a" stroke="#d9844a" stroke-width="1"/><path d="M116.5 22.5 H135 L126.5 31Z" fill="#f2d0b8"/><path d="M127 31L135 23V40Z" fill="#7aaa6a"/><path d="M127 42L132 37L127 50Z" fill="#4cc06e"/></g>
<g transform="translate(1200,130)"><path d="M172.5 51.5 V19 L185 6 H198" fill="none" stroke="#6b6b6b" stroke-width="1.2"/><path d="M173.5 19 H185 V51.5 H173.5Z" fill="#dcdcdc"/><path d="M172.5 51.5H184" stroke="#6b6b6b" stroke-width="1.2"/><path d="M185 19 L198.5 7 V39 L185 51.5Z" fill="#52c47a"/><path d="M203.5 19 L216.5 7 V39 L203.5 51.5Z" fill="#e8965a"/></g>
<g transform="translate(1440,120)"><path d="M37.5 34H77.5" stroke="#555" stroke-width="1.1"/><path d="M37.5 27.5V40.5M77.5 27.5V40.5" stroke="#555" stroke-width="1.1"/><path d="M38 34L43 31.5V36.5ZM77 34L72 31.5V36.5Z" fill="#555"/><rect x="36.5" y="42.5" width="42" height="9" fill="#f5a300"/><rect x="40.0" y="42.5" width="0.9" height="4" fill="#6a4a00"/><rect x="44.5" y="42.5" width="0.9" height="3" fill="#6a4a00"/><rect x="49.0" y="42.5" width="0.9" height="4" fill="#6a4a00"/><rect x="53.5" y="42.5" width="0.9" height="3" fill="#6a4a00"/><rect x="58.0" y="42.5" width="0.9" height="4" fill="#6a4a00"/><rect x="62.5" y="42.5" width="0.9" height="3" fill="#6a4a00"/><rect x="67.0" y="42.5" width="0.9" height="4" fill="#6a4a00"/><rect x="71.5" y="42.5" width="0.9" height="3" fill="#6a4a00"/><rect x="76.0" y="42.5" width="0.9" height="4" fill="#6a4a00"/></g>
<path d="M1582 147.5L1591 138.5L1620 138.5L1611 147.5Z" fill="#f6f6f6"/><path d="M1611 147.5L1620 138.5L1620 169L1611 178Z" fill="#c6c6c6"/><rect x="1582" y="147.5" width="29" height="30.5" fill="#e6e6e6"/><path d="M1582 178L1582 147.5L1591 138.5L1620 138.5L1620 169L1611 178Z" fill="none" stroke="#555" stroke-width="1.2" stroke-linejoin="round"/><path d="M1575 170 Q1580 160 1590 161 V156.5 L1598.5 163 L1590 169.5 V165.5 Q1581 165 1575 170Z" fill="#3a3a3a"/>
<rect x="1640" y="137" width="43.5" height="43.5" fill="#87c9f7"/><path d="M1640 166 Q1648 150 1656 157 Q1662 162 1666 170 Q1672 160 1676 163 Q1680 166 1683.5 172 V180.5 H1640Z" fill="#4390cf"/><circle cx="1671.5" cy="149" r="4.5" fill="#ffffc8"/>
<rect x="1730" y="131" width="57" height="57" fill="#0696d7"/><rect x="1734.5" y="136.5" width="41.5" height="31.5" fill="none" stroke="#5ee08a" stroke-width="1.2" stroke-dasharray="4 3"/><path d="M1766 157 L1766 177 L1770.5 172.5 L1774 180 L1777.5 178.5 L1774 171 L1780 171Z" fill="#fff"/></svg>
<svg width="1920" height="1014" viewBox="0 0 1920 1014" style="position:absolute;left:0;top:0" font-family="Liberation Sans, sans-serif"><rect x="8.5" y="227.5" width="449" height="36" fill="#f0f0f0" stroke="#c4c4c4" stroke-width="1"/>
<path d="M23 242 L15.5 246.5 L23 251Z M30.5 242 L23 246.5 L30.5 251Z" fill="#333"/>
<text x="45.5" y="251.0" font-size="17.39" fill="#555" font-weight="400" textLength="78.0" lengthAdjust="spacingAndGlyphs" >BROWSER</text>
<circle cx="433" cy="245.5" r="7" fill="#333"/><rect x="429" y="244.6" width="8" height="2" fill="#f0f0f0"/>
<rect x="62" y="272.5" width="89" height="29" fill="#ececec"/>
<rect x="151" y="272.5" width="226" height="29" fill="#ececec"/>
<defs><linearGradient id="trg" x1="0" y1="0" x2="1" y2="1"><stop offset="0" stop-color="#f4f4f4"/><stop offset="1" stop-color="#777"/></linearGradient></defs>
<path d="M49.5 279 L49.5 295 L33.5 295Z" fill="url(#trg)" stroke="#333" stroke-width="1.3" stroke-linejoin="round"/>
<path d="M67.0 287 Q78.5 274 90.0 287 Q78.5 300 67.0 287Z" fill="#999"/><circle cx="78.5" cy="287" r="4" fill="#f0f0f0"/><circle cx="78.5" cy="287" r="2.2" fill="#999"/>
<rect x="99.5" y="275" width="37.5" height="23.5" fill="#8c8c8c"/>
<path d="M105 281 L109 276.5 H127 V293 L123 297.5 H105Z" fill="#e6e8ee" stroke="#444" stroke-width="1.1" stroke-linejoin="round"/><path d="M105 281 H123 V297.5 M123 281 L127 276.5" fill="none" stroke="#444" stroke-width="1"/><path d="M123 281 L127 276.5 V293 L123 297.5Z" fill="#cfd2da"/>
<path d="M152.5 277.5 L163.5 298 L141.5 298Z" fill="#e8e800" stroke="#222" stroke-width="1.4" stroke-linejoin="round"/><rect x="151.7" y="284" width="1.8" height="8" fill="#222"/><rect x="151.7" y="294" width="1.8" height="1.8" fill="#222"/>
<rect x="174.5" y="275" width="167.5" height="23.5" fill="#8c8c8c"/>
<text x="186.0" y="293.5" font-size="18.12" fill="#ffffff" font-weight="700" textLength="140.0" lengthAdjust="spacingAndGlyphs" >Dice_Tray_Top v3</text>
<circle cx="360" cy="287.5" r="8.8" fill="#f4f4f4" stroke="#333" stroke-width="1.5"/><circle cx="360" cy="287.5" r="3.2" fill="#333"/>
<rect x="89" y="308.5" width="199" height="29" fill="#ededed"/>
<path d="M62 314 L74 323 L62 332Z" fill="#dcdcdc" stroke="#333" stroke-width="1.8" stroke-linejoin="round"/>
<polygon points="116.77,320.66 117.00,323.00 113.83,324.76 113.31,326.44 114.98,329.67 113.49,331.49 110.00,330.48 108.44,331.31 107.34,334.77 105.00,335.00 103.24,331.83 101.56,331.31 98.33,332.98 96.51,331.49 97.52,328.00 96.69,326.44 93.23,325.34 93.00,323.00 96.17,321.24 96.69,319.56 95.02,316.33 96.51,314.51 100.00,315.52 101.56,314.69 102.66,311.23 105.00,311.00 106.76,314.17 108.44,314.69 111.67,313.02 113.49,314.51 112.48,318.00 113.31,319.56" fill="#999"/><circle cx="105" cy="323" r="4.32" fill="#f0f0f0"/>
<text x="138.0" y="327.8" font-size="16.81" fill="#333" font-weight="400" textLength="135.0" lengthAdjust="spacingAndGlyphs" >Document Settings</text>
<rect x="89" y="344.5" width="165" height="29" fill="#ededed"/>
<path d="M62 350 L74 359 L62 368Z" fill="#dcdcdc" stroke="#333" stroke-width="1.8" stroke-linejoin="round"/>
<path d="M93.5 351 H103.5 L104.5 353 H117.5 V368.5 H93.5Z" fill="#999"/><rect x="93.5" y="349" width="9" height="2" fill="#999"/>
<text x="139.0" y="363.8" font-size="16.81" fill="#333" font-weight="400" textLength="101.6" lengthAdjust="spacingAndGlyphs" >Named Views</text>
<rect x="89" y="380.5" width="142.4" height="29" fill="#ededed"/>
<path d="M62 386 L74 395 L62 404Z" fill="#dcdcdc" stroke="#333" stroke-width="1.8" stroke-linejoin="round"/>
<path d="M131 387 H141 L142 389 H155 V404.5 H131Z" fill="#999"/><rect x="131" y="385" width="9" height="2" fill="#999"/>
<path d="M94.5 395 Q105.5 383 116.5 395 Q105.5 407 94.5 395Z" fill="none" stroke="#aaa" stroke-width="1.3"/><circle cx="105.5" cy="395" r="4.5" fill="none" stroke="#aaa" stroke-width="1.3"/><path d="M99.5 387 L112.5 403" stroke="#999" stroke-width="1.3"/>
<text x="176.0" y="399.8" font-size="16.81" fill="#333" font-weight="400" textLength="41.3" lengthAdjust="spacingAndGlyphs" >Origin</text>
<rect x="89" y="416.5" width="166.3" height="29" fill="#ededed"/>
<path d="M62 422 L74 431 L62 440Z" fill="#dcdcdc" stroke="#333" stroke-width="1.8" stroke-linejoin="round"/>
<path d="M131 423 H141 L142 425 H155 V440.5 H131Z" fill="#999"/><rect x="131" y="421" width="9" height="2" fill="#999"/>
<path d="M94.0 431 Q105.5 418 117.0 431 Q105.5 444 94.0 431Z" fill="#999"/><circle cx="105.5" cy="431" r="4" fill="#f0f0f0"/><circle cx="105.5" cy="431" r="2.2" fill="#999"/>
<text x="176.0" y="435.8" font-size="16.81" fill="#333" font-weight="400" textLength="62.5" lengthAdjust="spacingAndGlyphs" >Analysis</text>
<rect x="89" y="452.5" width="154.3" height="29" fill="#ededed"/>
<path d="M62 458 L74 467 L62 476Z" fill="#dcdcdc" stroke="#333" stroke-width="1.8" stroke-linejoin="round"/>
<path d="M131 459 H141 L142 461 H155 V476.5 H131Z" fill="#999"/><rect x="131" y="457" width="9" height="2" fill="#999"/>
<path d="M94.0 467 Q105.5 454 117.0 467 Q105.5 480 94.0 467Z" fill="#999"/><circle cx="105.5" cy="467" r="4" fill="#f0f0f0"/><circle cx="105.5" cy="467" r="2.2" fill="#999"/>
<text x="176.0" y="471.8" font-size="16.81" fill="#333" font-weight="400" textLength="49.6" lengthAdjust="spacingAndGlyphs" >Bodies</text>
<rect x="89" y="488.5" width="172" height="29" fill="#ededed"/>
<path d="M62 494 L74 503 L62 512Z" fill="#dcdcdc" stroke="#333" stroke-width="1.8" stroke-linejoin="round"/>
<path d="M131 495 H141 L142 497 H155 V512.5 H131Z" fill="#999"/><rect x="131" y="493" width="9" height="2" fill="#999"/>
<path d="M94.0 503 Q105.5 490 117.0 503 Q105.5 516 94.0 503Z" fill="#999"/><circle cx="105.5" cy="503" r="4" fill="#f0f0f0"/><circle cx="105.5" cy="503" r="2.2" fill="#999"/>
<text x="176.0" y="507.8" font-size="16.81" fill="#333" font-weight="400" textLength="67.0" lengthAdjust="spacingAndGlyphs" >Sketches</text>
<rect x="8.5" y="897.5" width="449" height="35" fill="#f0f0f0" stroke="#c4c4c4" stroke-width="1"/>
<text x="45.5" y="920.5" font-size="17.39" fill="#555" font-weight="400" textLength="85.0" lengthAdjust="spacingAndGlyphs" >COMMENTS</text>
<circle cx="433" cy="915" r="7" fill="#333"/><path d="M429 915H437M433 911V919" stroke="#f0f0f0" stroke-width="2"/>
<rect x="785" y="895" width="355.5" height="35.5" fill="#f0f0f0"/>
<path d="M801 925 V904" stroke="#444" stroke-width="1.3"/><path d="M797.5 906 L801 900.5 L804.5 906Z" fill="#f4f4f4" stroke="#444" stroke-width="1"/><path d="M805 911 Q815 914 811 917 Q805 920 794 918" fill="none" stroke="#444" stroke-width="2"/><path d="M795 914.5 L790.5 918 L795 921.5Z" fill="#444"/><rect x="799.5" y="908" width="3.5" height="17" fill="#f4f4f4" stroke="#444" stroke-width="1"/><path d="M821.5 910.5L829.5 910.5L825.5 914.9Z" fill="#444"/><rect x="840" y="906" width="23" height="18.5" rx="1" fill="#f4f4f4" stroke="#555" stroke-width="1.3"/><rect x="844" y="911.5" width="15.5" height="7" fill="#888" stroke="#555" stroke-width="1"/><path d="M843 906 L846 901 L852 904 L858 901 L861 906" fill="#888"/><path d="M882 918 Q879 913 881 912 Q883 911 885 915 V904 Q885 902 887 902 Q889 902 889 904 V912 V901.5 Q889 899.5 891 899.5 Q893 899.5 893 901.5 V912 V903 Q893 901 895 901 Q897 901 897 903 V913 V907 Q897 905 899 905 Q901 905 901 907 V917 Q901 925 894 925 H889 Q885 925 882 918Z" fill="#f8f8f8" stroke="#444" stroke-width="1.2"/><circle cx="926" cy="914" r="6.5" fill="#e0eef0" stroke="#444" stroke-width="1.5"/><path d="M931 919 L936 924.5" stroke="#333" stroke-width="3"/><path d="M937 902 V910 M933.5 906 H940.5 M933.5 912 H940.5" stroke="#333" stroke-width="1.3"/><rect x="956" y="902" width="24" height="22" fill="none" stroke="#555" stroke-width="1" stroke-dasharray="2 2"/><circle cx="966.5" cy="911.5" r="8" fill="#e0eef0" stroke="#444" stroke-width="1.8"/><path d="M972.5 917.5 L978.5 924" stroke="#333" stroke-width="3.2"/><path d="M988 910.5L996 910.5L992.0 914.9Z" fill="#444"/><rect x="1005.5" y="901.5" width="23.5" height="18" rx="1.5" fill="#eee" stroke="#555" stroke-width="1.3"/><rect x="1008.5" y="904.5" width="17.5" height="12" fill="#8cb4e8" stroke="#4a6aa8" stroke-width="0.8"/><path d="M1013 923.5 H1022 M1017.5 919.5 V923" stroke="#555" stroke-width="1.5"/><path d="M1033 910.5L1041 910.5L1037.0 914.9Z" fill="#444"/><rect x="1052.5" y="901.5" width="23.5" height="23" fill="#888" stroke="#555" stroke-width="1"/><path d="M1057.2 902V924.5M1053 906.1H1076" stroke="#ddd" stroke-width="1"/><path d="M1061.9 902V924.5M1053 910.7H1076" stroke="#ddd" stroke-width="1"/><path d="M1066.6 902V924.5M1053 915.3H1076" stroke="#ddd" stroke-width="1"/><path d="M1071.3 902V924.5M1053 919.9H1076" stroke="#ddd" stroke-width="1"/><path d="M1080 910.5L1088 910.5L1084.0 914.9Z" fill="#444"/><rect x="1098.5" y="902.5" width="22.5" height="21" rx="1" fill="#4a6aa8"/><rect x="1100.5" y="904.5" width="8" height="7" fill="#9ec0ea"/><rect x="1111" y="904.5" width="8" height="7" fill="#9ec0ea"/><rect x="1100.5" y="914.5" width="8" height="7" fill="#9ec0ea"/><rect x="1111" y="914.5" width="8" height="7" fill="#9ec0ea"/><path d="M1126 910.5L1134 910.5L1130.0 914.9Z" fill="#444"/>
<rect x="18.4" y="967" width="3" height="20.5" fill="#4a4a4a"/><path d="M21.5 977.2 L36.7 967.5 V987Z" fill="#4a4a4a"/><path d="M54.7 977.2 L69.5 967.5 V987Z" fill="#4a4a4a"/><rect x="71" y="973" width="3.2" height="10.5" fill="#4a4a4a"/><path d="M93.3 965.3 L111.3 977.4 L93.3 989.5Z" fill="#4a4a4a"/><rect x="129.4" y="973" width="3.1" height="10.5" fill="#4a4a4a"/><path d="M134 967.5 L148.4 977.2 L134 987Z" fill="#4a4a4a"/><path d="M168.4 967.5 L182.8 977.2 L168.4 987Z" fill="#4a4a4a"/><rect x="183.6" y="967" width="3.1" height="20.5" fill="#4a4a4a"/><path d="M221.9 965.5H240.4M221.9 965.5V984M240.4 965.5V976M221.9 984H232.9" stroke="#555" stroke-width="1.1" fill="none"/><rect x="220.4" y="964.0" width="3" height="3" fill="#1e88e5"/><rect x="238.9" y="964.0" width="3" height="3" fill="#1e88e5"/><rect x="220.4" y="982.5" width="3" height="3" fill="#1e88e5"/><path d="M233.9 986 L241.9 977 L244.9 980 L236.9 989Z" fill="#f0b040"/><circle cx="243.70000000000002" cy="978" r="2" fill="#e83030"/><path d="M257.9 965.5H276.4M257.9 965.5V984M276.4 965.5V976M257.9 984H268.9" stroke="#555" stroke-width="1.1" fill="none"/><rect x="256.4" y="964.0" width="3" height="3" fill="#1e88e5"/><rect x="274.9" y="964.0" width="3" height="3" fill="#1e88e5"/><rect x="256.4" y="982.5" width="3" height="3" fill="#1e88e5"/><path d="M269.9 986 L277.9 977 L280.9 980 L272.9 989Z" fill="#f0b040"/><circle cx="279.7" cy="978" r="2" fill="#e83030"/><path d="M292.7 983.5H307.7 L312.2 979V983 L307.7 987.5H292.7Z" fill="#c4c4c4"/><path d="M292.7 969.5 L297.2 965 H312.2 L307.7 969.5Z" fill="#8dcbf8"/><path d="M307.7 969.5 L312.2 965 V979.5 L307.7 984Z" fill="#4793cf"/><rect x="292.7" y="969.5" width="15" height="14.5" fill="#6ab0e6"/><path d="M315.7 983 V967" stroke="#333" stroke-width="1.1"/><path d="M313.7 968.5 L315.7 964.5 L317.7 968.5Z" fill="#333"/><path d="M328.7 983.5H343.7 L348.2 979V983 L343.7 987.5H328.7Z" fill="#c4c4c4"/><path d="M328.7 969.5 L333.2 965 H348.2 L343.7 969.5Z" fill="#8dcbf8"/><path d="M343.7 969.5 L348.2 965 V979.5 L343.7 984Z" fill="#4793cf"/><rect x="328.7" y="969.5" width="15" height="14.5" fill="#6ab0e6"/><path d="M351.7 983 V967" stroke="#333" stroke-width="1.1"/><path d="M349.7 968.5 L351.7 964.5 L353.7 968.5Z" fill="#333"/><path d="M365.9 965.5H384.4M365.9 965.5V984M384.4 965.5V976M365.9 984H376.9" stroke="#555" stroke-width="1.1" fill="none"/><rect x="364.4" y="964.0" width="3" height="3" fill="#1e88e5"/><rect x="382.9" y="964.0" width="3" height="3" fill="#1e88e5"/><rect x="364.4" y="982.5" width="3" height="3" fill="#1e88e5"/><path d="M377.9 986 L385.9 977 L388.9 980 L380.9 989Z" fill="#f0b040"/><circle cx="387.7" cy="978" r="2" fill="#e83030"/><path d="M400.8 983.5H415.8 L420.3 979V983 L415.8 987.5H400.8Z" fill="#c4c4c4"/><path d="M400.8 969.5 L405.3 965 H420.3 L415.8 969.5Z" fill="#8dcbf8"/><path d="M415.8 969.5 L420.3 965 V979.5 L415.8 984Z" fill="#4793cf"/><rect x="400.8" y="969.5" width="15" height="14.5" fill="#6ab0e6"/><path d="M423.8 983 V967" stroke="#333" stroke-width="1.1"/><path d="M421.8 968.5 L423.8 964.5 L425.8 968.5Z" fill="#333"/><path d="M436.8 983.5H451.8 L456.3 979V983 L451.8 987.5H436.8Z" fill="#c4c4c4"/><path d="M436.8 969.5 L441.3 965 H456.3 L451.8 969.5Z" fill="#8dcbf8"/><path d="M451.8 969.5 L456.3 965 V979.5 L451.8 984Z" fill="#4793cf"/><rect x="436.8" y="969.5" width="15" height="14.5" fill="#6ab0e6"/><path d="M459.8 983 V967" stroke="#333" stroke-width="1.1"/><path d="M457.8 968.5 L459.8 964.5 L461.8 968.5Z" fill="#333"/><path d="M472.6 983.5H487.6 L492.1 979V983 L487.6 987.5H472.6Z" fill="#c4c4c4"/><path d="M472.6 969.5 L477.1 965 H492.1 L487.6 969.5Z" fill="#8dcbf8"/><path d="M487.6 969.5 L492.1 965 V979.5 L487.6 984Z" fill="#4793cf"/><rect x="472.6" y="969.5" width="15" height="14.5" fill="#6ab0e6"/><path d="M495.6 983 V967" stroke="#333" stroke-width="1.1"/><path d="M493.6 968.5 L495.6 964.5 L497.6 968.5Z" fill="#333"/><path d="M509.6 965.5H528.1M509.6 965.5V984M528.1 965.5V976M509.6 984H520.6" stroke="#555" stroke-width="1.1" fill="none"/><rect x="508.1" y="964.0" width="3" height="3" fill="#1e88e5"/><rect x="526.6" y="964.0" width="3" height="3" fill="#1e88e5"/><rect x="508.1" y="982.5" width="3" height="3" fill="#1e88e5"/><path d="M521.6 986 L529.6 977 L532.6 980 L524.6 989Z" fill="#f0b040"/><circle cx="531.4" cy="978" r="2" fill="#e83030"/><path d="M544.6 983.5H559.6 L564.1 979V983 L559.6 987.5H544.6Z" fill="#c4c4c4"/><path d="M544.6 969.5 L549.1 965 H564.1 L559.6 969.5Z" fill="#8dcbf8"/><path d="M559.6 969.5 L564.1 965 V979.5 L559.6 984Z" fill="#4793cf"/><rect x="544.6" y="969.5" width="15" height="14.5" fill="#6ab0e6"/><path d="M567.6 983 V967" stroke="#333" stroke-width="1.1"/><path d="M565.6 968.5 L567.6 964.5 L569.6 968.5Z" fill="#333"/><path d="M234 993 V1001.5 H557.5 V993" fill="none" stroke="#c8c8c8" stroke-width="2"/><path d="M270 993 V1001" stroke="#c8c8c8" stroke-width="2"/><path d="M305.8 993 V1001" stroke="#c8c8c8" stroke-width="2"/><path d="M341.7 993 V1001" stroke="#c8c8c8" stroke-width="2"/><path d="M377.6 993 V1001" stroke="#c8c8c8" stroke-width="2"/><path d="M413.5 993 V1001" stroke="#c8c8c8" stroke-width="2"/><path d="M449.4 993 V1001" stroke="#c8c8c8" stroke-width="2"/><path d="M485.3 993 V1001" stroke="#c8c8c8" stroke-width="2"/><path d="M521.2 993 V1001" stroke="#c8c8c8" stroke-width="2"/><path d="M565.5 955.5 H584 V962 L576 968.5 V1003.5 H573.5 V968.5 L565.5 962Z" fill="#666"/><polygon points="1902.56,974.86 1902.80,977.30 1899.49,979.13 1898.96,980.89 1900.69,984.24 1899.14,986.14 1895.51,985.10 1893.89,985.96 1892.74,989.56 1890.30,989.80 1888.47,986.49 1886.71,985.96 1883.36,987.69 1881.46,986.14 1882.50,982.51 1881.64,980.89 1878.04,979.74 1877.80,977.30 1881.11,975.47 1881.64,973.71 1879.91,970.36 1881.46,968.46 1885.09,969.50 1886.71,968.64 1887.86,965.04 1890.30,964.80 1892.13,968.11 1893.89,968.64 1897.24,966.91 1899.14,968.46 1898.10,972.09 1898.96,973.71" fill="#999"/><circle cx="1890.3" cy="977.3" r="4.50" fill="#f0f0f0"/>
<defs><radialGradient id="vcs" cx="0.5" cy="0.5" r="0.5"><stop offset="0" stop-color="#000" stop-opacity="0.18"/><stop offset="1" stop-color="#000" stop-opacity="0"/></radialGradient></defs><ellipse cx="1862" cy="318" rx="40" ry="16" fill="url(#vcs)"/><path d="M1821.5 265.6 L1856.7 284.9 L1856.7 326.4 L1825 305.6Z" fill="#ebebeb" fill-opacity="0.82" stroke="#555" stroke-width="0.9"/><path d="M1856.7 284.9 L1891.9 266.3 L1889 302.9 L1856.7 326.4Z" fill="#e6e6e6" fill-opacity="0.82" stroke="#555" stroke-width="0.9"/><path d="M1821.5 265.6 L1856.7 249.7 L1891.9 266.3 L1856.7 284.9Z" fill="#f0f0f0" fill-opacity="0.82" stroke="#555" stroke-width="0.9"/><text x="0" y="0" font-size="8.5" font-weight="700" fill="#808080" textLength="25" lengthAdjust="spacingAndGlyphs" transform="matrix(0.866,0.5,0,1,1827.5,294)">FRONT</text><text x="0" y="0" font-size="8.5" font-weight="700" fill="#888" textLength="23" lengthAdjust="spacingAndGlyphs" transform="matrix(0.866,-0.5,0,1,1864,307)">RIGHT</text><text x="0" y="0" font-size="7" font-weight="700" fill="#999" textLength="14" lengthAdjust="spacingAndGlyphs" transform="matrix(0.866,0.5,-0.866,0.5,1851,262)">TOP</text><path d="M1820 260 L1823.5 305" stroke="#7070ff" stroke-width="2"/><path d="M1824 306 L1861 331" stroke="#ff8888" stroke-width="2"/><text x="1815" y="257" font-size="10" fill="#8080ff">Z</text><text x="1864" y="341" font-size="10" fill="#ff8080">X</text></svg>
</body></html>
